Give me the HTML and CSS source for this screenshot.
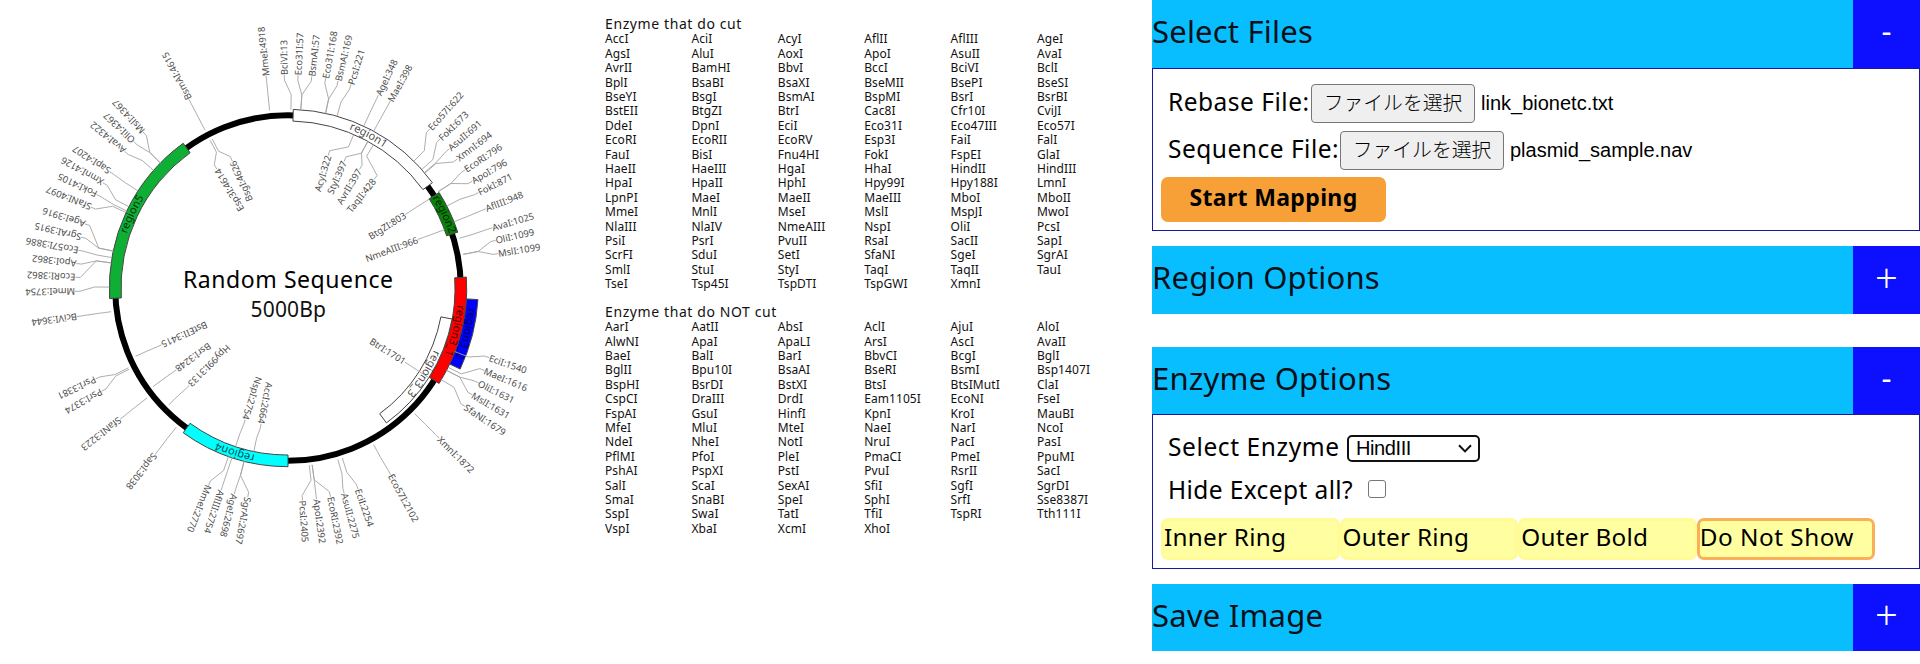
FILE: index.html
```html
<!DOCTYPE html>
<html lang="ja">
<head>
<meta charset="utf-8">
<title>Plasmid Mapper</title>
<link rel="stylesheet" href="styles.css">
</head>
<body>
<div class="app">
  <svg class="map" id="map" width="590" height="664" viewBox="0 0 590 664">
    <circle class="ring" cx="288" cy="288" r="172.8"/>
    <g id="bands"></g>
    <g id="sites"></g>
    <text class="map-title" x="183" y="287.5" textLength="210">Random Sequence</text>
    <text class="map-size" x="250.5" y="317" textLength="75.5">5000Bp</text>
  </svg>

  <main class="lists">
    <h2 class="list-title">Enzyme that do cut</h2>
    <div class="enzymes" id="cut"></div>
    <h2 class="list-title list-title-no">Enzyme that do NOT cut</h2>
    <div class="enzymes" id="nocut"></div>
  </main>

  <aside class="side">
    <section class="card">
      <header class="head"><span class="head-text">Select Files</span><button class="toggle">-</button></header>
      <div class="body body-files">
        <div class="row row-file"><span class="label label-rebase">Rebase File:</span><button class="file">ファイルを選択</button><span class="filename">link_bionetc.txt</span></div>
        <div class="row row-file"><span class="label label-seq">Sequence File:</span><button class="file">ファイルを選択</button><span class="filename">plasmid_sample.nav</span></div>
        <button class="start">Start Mapping</button>
      </div>
    </section>
    <section class="card card-region">
      <header class="head"><span class="head-text">Region Options</span><button class="toggle toggle-plus">+</button></header>
    </section>
    <section class="card">
      <header class="head head-short"><span class="head-text">Enzyme Options</span><button class="toggle">-</button></header>
      <div class="body body-enzyme">
        <div class="row row-select"><span class="label label-select">Select Enzyme</span><button class="select"><span>HindIII</span><svg width="14" height="9" viewBox="0 0 14 9"><path class="chevron" d="M1 1.2 7 7.4 13 1.2"/></svg></button></div>
        <div class="row row-hide"><span class="label label-hide">Hide Except all?</span><input class="check" type="checkbox"></div>
        <div class="tabs">
          <button class="tab">Inner Ring</button><button class="tab">Outer Ring</button><button class="tab">Outer Bold</button><button class="tab tab-on">Do Not Show</button>
        </div>
      </div>
    </section>
    <section class="card">
      <header class="head head-short"><span class="head-text">Save Image</span><button class="toggle toggle-plus">+</button></header>
    </section>
  </aside>
</div>
<script src="map.js"></script>
</body>
</html>
```
FILE: styles.css
```css
* { box-sizing: border-box; }
body { margin: 0; background: #fff; color: #000; font-family: "Noto Sans", "Noto Sans CJK JP", sans-serif; }
button { margin: 0; padding: 0; border: 0; font: inherit; color: inherit; text-align: left; }
.app { display: grid; grid-template-columns: 605px 547px 768px; height: 664px; overflow: hidden; }

.map { display: block; }
.ring { fill: none; stroke: #000; stroke-width: 6; }
.band { stroke: #444; stroke-width: 1; }
.band-name { font-size: 11px; fill: #000; fill-opacity: .75; text-anchor: middle; }
.arc { fill: none; stroke: none; }
.leader { fill: none; stroke: #a4a4a4; stroke-width: .9; }
.site { font-size: 9.4px; fill: #4c4c4c; }
.site-inner { text-anchor: end; }
.map-title { font-size: 23px; }
.map-size { font-size: 21px; fill: #111; }

.lists { padding-top: 18px; }
.list-title { margin: 0; height: 14.4px; line-height: 12px; font-size: 14px; font-weight: 400; letter-spacing: .6px; color: #111; }
.list-title-no { margin-top: 14px; }
.enzymes { display: grid; grid-template-columns: repeat(6, 86.4px); grid-auto-rows: 14.41px; line-height: 14.4px; font-size: 12px; letter-spacing: .08px; color: #111; }
.enzymes span { white-space: nowrap; }

.card { margin-bottom: 15px; }
.card-region { margin-bottom: 33px; }
.head { display: flex; height: 68px; background: #08beff; }
.head-short { height: 67px; }
.head-text { flex: 1; font-size: 31px; line-height: 62px; letter-spacing: .2px; color: #061018; }
.toggle { width: 67px; background: #0d10ff; color: #fff; font-size: 31px; line-height: 61px; text-align: center; align-self: stretch; display: block; padding-bottom: 7px; }
.toggle-plus { font-size: 40px; font-weight: 300; padding-bottom: 6px; }
.body { border: 1px solid #1818a8; }
.body-files { height: 163px; padding: 15px 8px 0; }
.row { display: flex; align-items: center; padding-left: 8px; }
.row-file { height: 39px; margin-bottom: 8px; }
.label { font-size: 24.5px; line-height: 35px; height: 39px; letter-spacing: .5px; white-space: nowrap; text-indent: -1px; }
.label-rebase { width: 142px; }
.label-seq { width: 171px; }
.file { width: 164px; height: 39px; border: 1px solid #767676; border-radius: 4px; background: #efefef; font: 300 19.8px/34px "Noto Sans CJK JP", sans-serif; text-align: center; padding-bottom: 4px; white-space: nowrap; }
.filename { margin-left: 6px; font: 20px/38px "Liberation Sans", Arial, sans-serif; height: 39px; }
.start { display: block; width: 225px; height: 45px; margin-top: -1px; padding-bottom: 4px; border-radius: 7px; background: #f6a037; font-size: 23px; font-weight: 700; letter-spacing: .35px; line-height: 41px; text-align: center; }
.body-enzyme { height: 155px; padding: 20px 8px 0; }
.row-select { height: 27px; }
.label-select { width: 178px; line-height: 36px; letter-spacing: .6px; }
.select { display: flex; align-items: center; justify-content: space-between; width: 133px; height: 27px; border: 2px solid #111; border-radius: 5px; background: #fff; padding: 0 6px 0 7px; font: 20px/23px "Liberation Sans", Arial, sans-serif; letter-spacing: -.4px; }
.chevron { fill: none; stroke: #111; stroke-width: 2; }
.row-hide { height: 39px; margin-top: 8px; }
.label-hide { width: 199px; line-height: 39px; letter-spacing: .4px; }
.check { appearance: none; width: 18px; height: 18px; margin: -1px 0 0; border: 1px solid #767676; border-radius: 3px; background: #fff; }
.tabs { display: flex; margin-top: 9px; }
.tab { width: 178.6px; height: 42px; padding: 0 0 4px 0; border: 3px solid #fffb96; border-radius: 7px; background: #ffffa1; font-size: 24.3px; line-height: 32px; letter-spacing: .25px; white-space: nowrap; }
.tab-on { border-color: #fab058; letter-spacing: .5px; }
```
FILE: map.js
```js
const NS = "http://www.w3.org/2000/svg";
const C = 288, TOTAL = 5000;

function el(parent, name, attrs, text) {
  const node = document.createElementNS(NS, name);
  for (const key in attrs) node.setAttribute(key, attrs[key]);
  if (text) node.textContent = text;
  parent.appendChild(node);
  return node;
}
function at(r, deg) {
  const t = deg * Math.PI / 180;
  return (C + r * Math.sin(t)).toFixed(2) + " " + (C - r * Math.cos(t)).toFixed(2);
}

// name, start angle, end angle, inner radius, outer radius, fill
const bands = [
  ["region1", 1.7, 53.9, 167, 178.7, "#fff"],
  ["region2", 57.7, 71.8, 167, 178.7, "#0a820a"],
  ["region3_2", 93.5, 115.2, 178.7, 190.3, "#00f"],
  ["region3_1", 86.5, 122.3, 167, 178.7, "#f00"],
  ["region3_3", 100.7, 143.9, 155.6, 167, "#fff"],
  ["region4", 180, 215.9, 167, 178.7, "#0ff"],
  ["region5", 266.6, 324.1, 167, 178.7, "#0fae35"]
];
const bandLayer = document.getElementById("bands");
for (const [name, a, b, r0, r1, fill] of bands) {
  el(bandLayer, "path", { class: "band", fill,
    d: `M${at(r1, a)}A${r1} ${r1} 0 0 1 ${at(r1, b)}L${at(r0, b)}A${r0} ${r0} 0 0 0 ${at(r0, a)}Z` });
}
for (const [name, a, b, r0] of bands) {
  const r = r0 + 3, mid = (a + b) / 2;
  el(bandLayer, "path", { class: "arc", id: "arc-" + name, d: `M${at(r, mid - 20)}A${r} ${r} 0 0 1 ${at(r, mid + 20)}` });
  const text = el(bandLayer, "text", { class: "band-name" });
  el(text, "textPath", { href: "#arc-" + name, startOffset: "50%" }, name);
}

// enzyme:position, label angle
const outer = `MmeI:4918 354.1,BciVI:13 -1,Eco31I:57 2.7,BsmAI:57 6.4,Eco31I:168 10.2,BsmAI:169 13.6,PcsI:221 17.2,
AgeI:348 25.1,MaeI:398 28.7,Eco57I:622 41.7,FokI:673 45.6,AsuII:691 49.2,XmnI:694 52.7,EcoRI:796 56.3,ApoI:796 59.9,
FokI:871 63.4,AflIII:948 68.2,AvaI:1025 73.6,OliI:1099 77.1,MslI:1099 80.7,EciI:1540 109.1,MaeI:1616 112.8,
OliI:1631 116.5,MslI:1631 120.1,SfaNI:1679 123.8,XmnI:1872 134.8,Eco57I:2102 151.2,EciI:2254 160.8,AsuII:2275 164.7,
EcoRI:2392 168.5,ApoI:2392 172.3,PcsI:2405 176.1,SgrAI:2697 190.9,AgeI:2698 194.6,AflIII:2754 198.3,MmeI:2770 201.9,
SapI:3038 218.6,SfaNI:3223 232,PsrI:3374 241,PsrI:3381 244.7,BciVI:3644 262.3,MmeI:3754 269.1,EcoRI:3862 272.9,
ApoI:3862 276.6,Eco57I:3886 280.2,SgrAI:3915 283.8,AgeI:3916 287.5,SfaNI:4097 292.3,FokI:4105 296,XmnI:4126 299.6,
SapI:4207 303.1,AvaI:4322 309.9,OliI:4367 313.5,MslI:4367 317.1,BsmAI:4615 332.3`;
const inner = `AcyI:322 16.9,StyI:397 23.9,AvrII:397 31.1,TaqII:428 38.4,BtgZI:803 57.9,NmeAIII:966 69.5,BtrI:1701 122.4,
AccI:2664 191.2,NspI:2754 198,Hpy99I:3133 225.4,BsrI:3248 233.8,BstEII:3415 245.8,Esp3I:4614 329.1,BsgI:4626 336.3`;
const siteLayer = document.getElementById("sites");
function drawSites(list, radii, textRadius, cls) {
  for (const item of list.split(",")) {
    const [label, deg] = item.trim().split(" ");
    const site = label.split(":")[1] * 360 / TOTAL;
    const [r0, r1, r2, r3] = radii;
    el(siteLayer, "path", { class: "leader", d: `M${at(r0, site)}L${at(r1, site)}L${at(r2, deg)}L${at(r3, deg)}` });
    el(siteLayer, "text", { class: cls, x: textRadius, y: 3.4,
      transform: `translate(${C} ${C}) rotate(${deg - 90})` }, label);
  }
}
drawSites(outer, [178.5, 193.5, 208, 213], 213, "site");
drawSites(inner, [167, 153.5, 143.5, 138.5], 138.3, "site site-inner");

const cut = `AccI AciI AcyI AflII AflIII AgeI AgsI AluI AoxI ApoI AsuII AvaI AvrII BamHI BbvI BccI BciVI BclI
BplI BsaBI BsaXI BseMII BsePI BseSI BseYI BsgI BsmAI BspMI BsrI BsrBI BstEII BtgZI BtrI Cac8I Cfr10I CviJI
DdeI DpnI EciI Eco31I Eco47III Eco57I EcoRI EcoRII EcoRV Esp3I FaiI FalI FauI BisI Fnu4HI FokI FspEI GlaI
HaeII HaeIII HgaI HhaI HindII HindIII HpaI HpaII HphI Hpy99I Hpy188I LmnI LpnPI MaeI MaeII MaeIII MboI MboII
MmeI MnlI MseI MslI MspJI MwoI NlaIII NlaIV NmeAIII NspI OliI PcsI PsiI PsrI PvuII RsaI SacII SapI
ScrFI SduI SetI SfaNI SgeI SgrAI SmlI StuI StyI TaqI TaqII TauI TseI Tsp45I TspDTI TspGWI XmnI`;
const nocut = `AarI AatII AbsI AclI AjuI AloI AlwNI ApaI ApaLI ArsI AscI AvaII BaeI BalI BarI BbvCI BcgI BglI
BglII Bpu10I BsaAI BseRI BsmI Bsp1407I BspHI BsrDI BstXI BtsI BtsIMutI ClaI CspCI DraIII DrdI Eam1105I EcoNI FseI
FspAI GsuI HinfI KpnI KroI MauBI MfeI MluI MteI NaeI NarI NcoI NdeI NheI NotI NruI PacI PasI
PflMI PfoI PleI PmaCI PmeI PpuMI PshAI PspXI PstI PvuI RsrII SacI SalI ScaI SexAI SfiI SgfI SgrDI
SmaI SnaBI SpeI SphI SrfI Sse8387I SspI SwaI TatI TfiI TspRI Tth111I VspI XbaI XcmI XhoI`;
function fill(id, names) {
  const box = document.getElementById(id);
  for (const name of names.split(/\s+/)) {
    const cell = document.createElement("span");
    cell.textContent = name;
    box.appendChild(cell);
  }
}
fill("cut", cut);
fill("nocut", nocut);
```
